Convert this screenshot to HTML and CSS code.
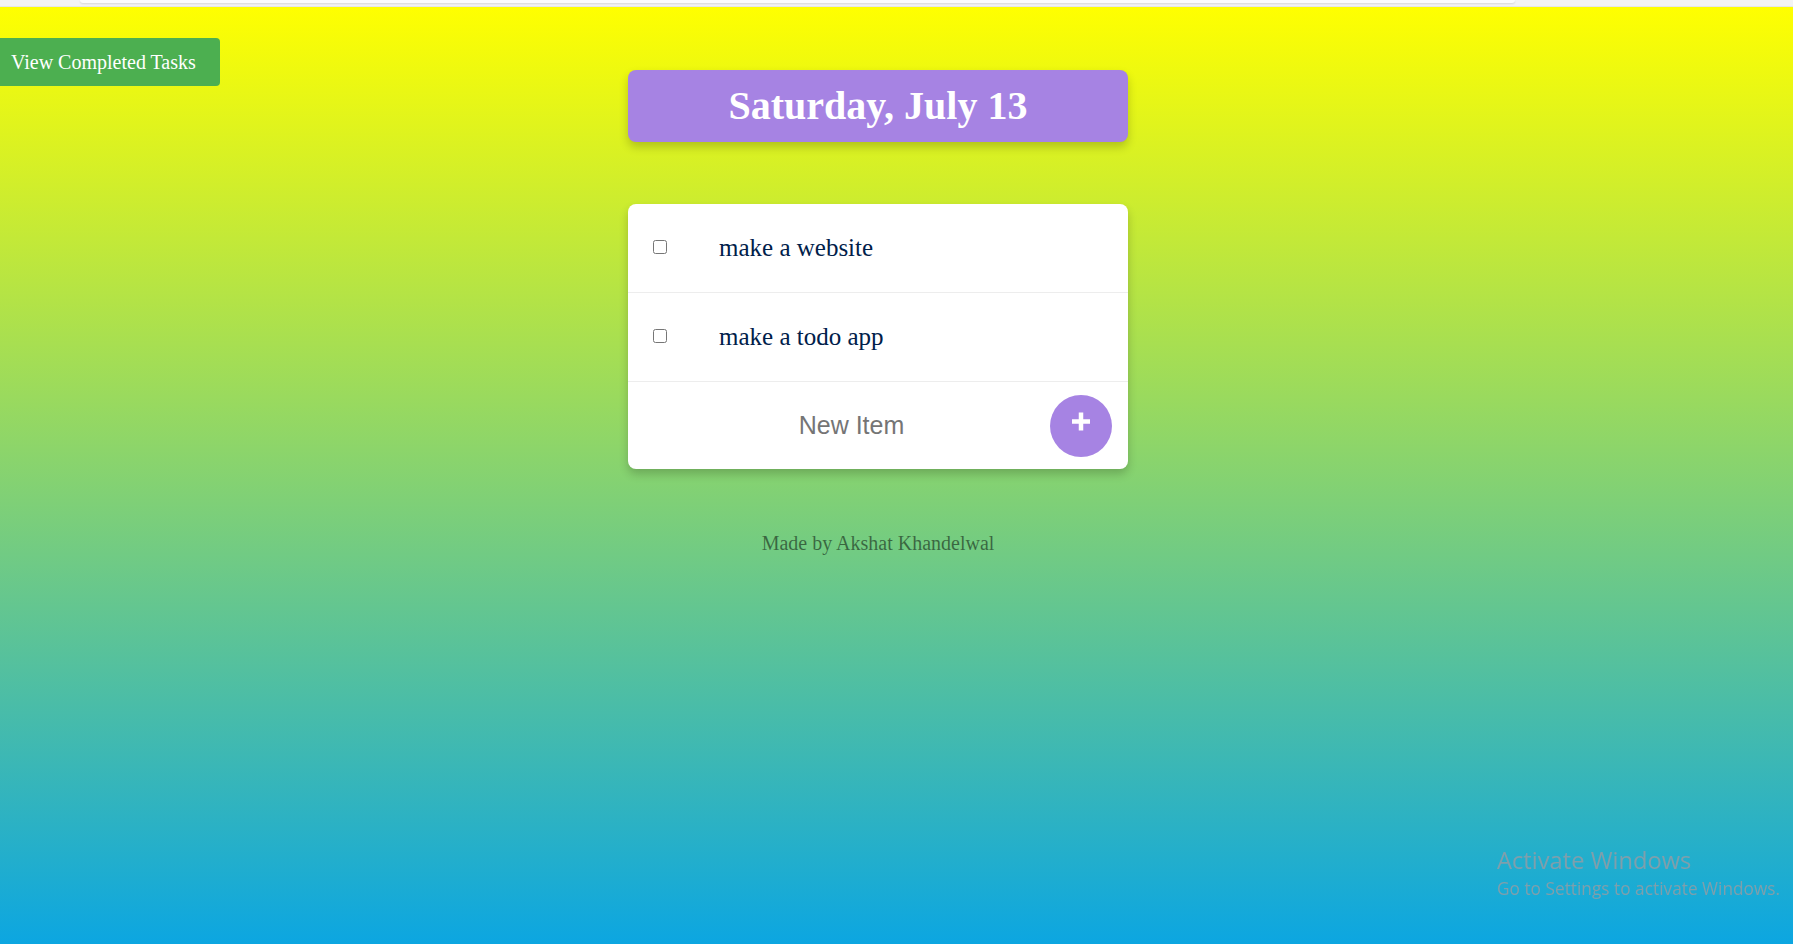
FILE: index.html
```html
<!DOCTYPE html>
<html lang="en">
<head>
<meta charset="utf-8">
<title>Todo</title>
<link rel="stylesheet" href="styles.css">
</head>
<body>
<div class="chrome"><div class="chrome-bar"></div></div>
<main class="page">
  <button class="completed-btn">View Completed Tasks</button>
  <div class="date-box"><h1 class="date">Saturday, July 13</h1></div>
  <section class="card">
    <div class="item">
      <input type="checkbox" class="check">
      <p class="item-text">make a website</p>
    </div>
    <div class="item">
      <input type="checkbox" class="check">
      <p class="item-text">make a todo app</p>
    </div>
    <form class="item new-row" onsubmit="return false">
      <input type="text" class="new-input" placeholder="New Item">
      <button type="button" class="add-btn" aria-label="Add">
        <svg width="62" height="62" viewBox="0 0 62 62"><path d="M31 17.5V35.5M22 26.5H40" stroke="#fff" stroke-width="4.5" fill="none"/></svg>
      </button>
    </form>
  </section>
  <footer class="footer">Made by Akshat Khandelwal</footer>
</main>
<div class="activate">
  <div class="act-title">Activate Windows</div>
  <div class="act-sub">Go to Settings to activate Windows.</div>
</div>
</body>
</html>
```
FILE: styles.css
```css
html, body {
  margin: 0;
  padding: 0;
}
body {
  width: 1793px;
  height: 944px;
  overflow: hidden;
  font-family: "Liberation Serif", "Times New Roman", serif;
}
.chrome {
  height: 6px;
  background: #f3f3f3;
  border-bottom: 1px solid #e6e6e6;
  overflow: hidden;
}
.chrome-bar {
  margin: 0 278px 0 80px;
  height: 3px;
  background: #fbfbfb;
  border-radius: 0 0 4px 4px;
  box-shadow: 0 1px 2px rgba(0,0,0,0.12);
}
.page {
  box-sizing: border-box;
  height: 937px;
  padding-right: 37px;
  background: linear-gradient(to bottom, #ffff00 0%, #0ca6e1 100%);
  display: flex;
  flex-direction: column;
  align-items: center;
}
.completed-btn {
  align-self: flex-start;
  margin: 31px 0 -16px 0;
  width: 220px;
  height: 48px;
  padding: 0 0 0 11px;
  text-align: left;
  background: #4caf50;
  color: #fff;
  border: none;
  border-radius: 0 4px 4px 0;
  font-family: "Liberation Serif", "Times New Roman", serif;
  font-size: 20px;
}
.date-box {
  width: 500px;
  background: #a683e3;
  border-radius: 8px;
  box-shadow: 0 5px 10px rgba(0,0,0,0.2);
}
.date {
  margin: 0;
  padding: 13px 0;
  line-height: 46px;
  font-size: 40px;
  font-weight: bold;
  color: #fff;
  text-align: center;
}
.card {
  margin-top: 62px;
  width: 500px;
  background: #fff;
  border-radius: 8px;
  box-shadow: 0 5px 10px rgba(0,0,0,0.2);
  overflow: hidden;
}
.item {
  height: 88px;
  display: flex;
  align-items: center;
  padding: 0 0 0 25px;
  border-bottom: 1px solid #ededed;
  margin: 0;
}
.check {
  margin: 0;
  width: 14px;
  height: 14px;
  position: relative;
  top: -1px;
}
.item-text {
  margin: 0 0 0 52px;
  font-size: 25px;
  color: #00204a;
  line-height: 28px;
}
.new-row {
  height: 87px;
  border-bottom: none;
  padding-right: 16px;
}
.new-input {
  flex: 1;
  min-width: 0;
  height: 40px;
  padding: 0;
  border: none;
  outline: none;
  background: transparent;
  text-align: center;
  font-family: "Liberation Sans", Arial, sans-serif;
  font-size: 25px;
  color: #333;
}
.new-input::placeholder {
  color: #757575;
}
.add-btn {
  width: 62px;
  height: 62px;
  padding: 0;
  border: none;
  border-radius: 50%;
  background: #a683e3;
  display: flex;
  align-items: center;
  justify-content: center;
}
.add-btn svg {
  display: block;
}
.footer {
  margin-top: 63px;
  font-size: 20px;
  line-height: 23px;
  color: rgba(0,0,0,0.5);
}
.activate {
  position: fixed;
  left: 1497px;
  top: 844px;
  font-family: "Open Sans", "Noto Sans", sans-serif;
  color: #7f9fac;
}
.act-title {
  font-size: 23.7px;
  line-height: 32px;
}
.act-sub {
  font-size: 17.3px;
  line-height: 24px;
  margin-top: 1px;
}
```
